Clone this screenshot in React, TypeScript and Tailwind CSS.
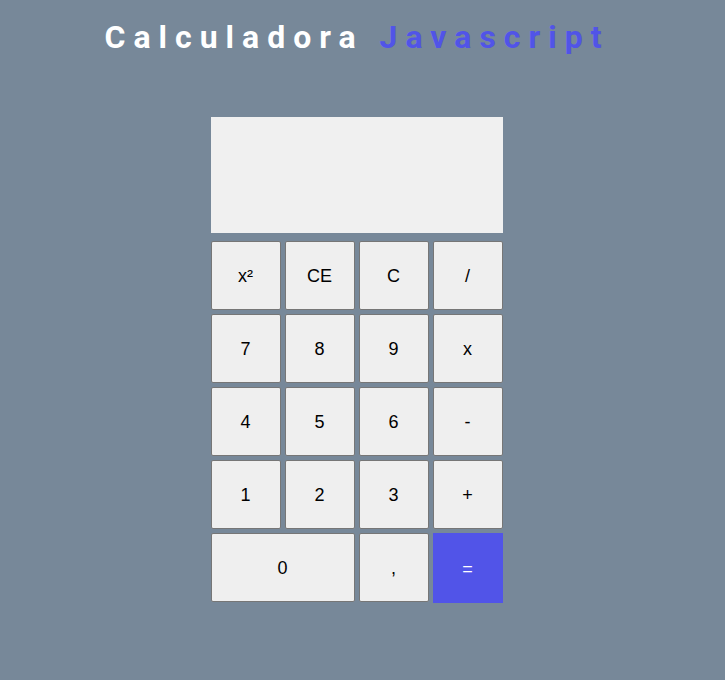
import React from 'react'

const keys: { label: string; wide?: boolean; accent?: boolean }[] = [
  { label: 'x²' },
  { label: 'CE' },
  { label: 'C' },
  { label: '/' },
  { label: '7' },
  { label: '8' },
  { label: '9' },
  { label: 'x' },
  { label: '4' },
  { label: '5' },
  { label: '6' },
  { label: '-' },
  { label: '1' },
  { label: '2' },
  { label: '3' },
  { label: '+' },
  { label: '0', wide: true },
  { label: ',' },
  { label: '=', accent: true },
]

const App = () => {
  return (
    <div className="min-h-[680px] w-full bg-[#778899] flex flex-col items-center">
      {/* Header */}
      <h1 className="mt-[19px] text-[32px] leading-[37px] font-bold tracking-[8px] text-white font-['Roboto',sans-serif] mr-[11px]">
        Calculadora <span className="text-[#5154e8]">Javascript</span>
      </h1>

      <div className="mt-[61px] w-[292px] flex flex-col gap-2 mr-[12px]">
        <div className="h-[116px] bg-[#f0f0f0]" />
        <div className="grid grid-cols-[repeat(4,70px)] auto-rows-[69px] gap-x-1 gap-y-1">
          {keys.map((k) =>
            k.accent ? (
              <button
                key={k.label}
                className="h-[70px] pt-[2px] bg-[#5154e8] text-white text-[18px] font-['Liberation_Sans',Arial,sans-serif]"
              >
                {k.label}
              </button>
            ) : (
              <button
                key={k.label}
                className={
                  k.wide
                    ? 'col-span-2 pt-[2px] bg-[#efefef] border border-[#767676] rounded-[2px] text-black text-[18px] font-[\'Liberation_Sans\',Arial,sans-serif]'
                    : 'pt-[2px] bg-[#efefef] border border-[#767676] rounded-[2px] text-black text-[18px] font-[\'Liberation_Sans\',Arial,sans-serif]'
                }
              >
                {k.label}
              </button>
            ),
          )}
        </div>
      </div>
    </div>
  )
}

export default App
